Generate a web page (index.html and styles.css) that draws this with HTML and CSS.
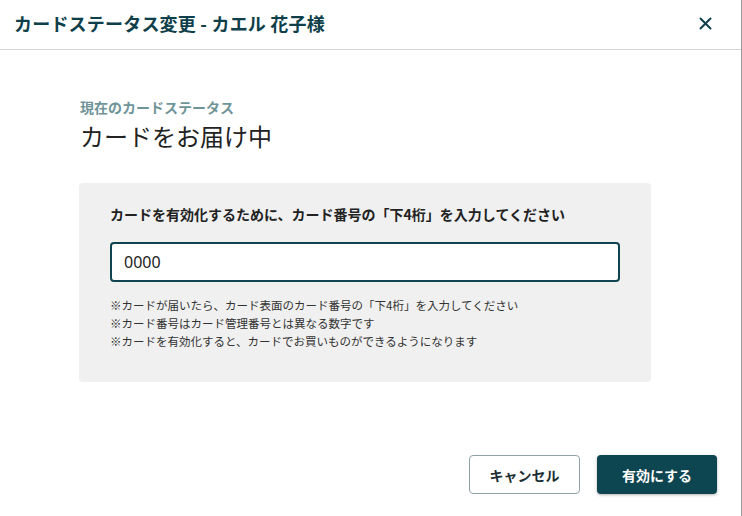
FILE: index.html
```html
<!DOCTYPE html>
<html lang="ja">
<head>
<meta charset="utf-8">
<link rel="stylesheet" href="styles.css">
</head>
<body>
<div class="dialog">
  <header class="dialog-header">
    <h1 class="dialog-title">カードステータス変更 - カエル 花子様</h1>
    <button class="close-btn" aria-label="閉じる">
      <svg width="13" height="13" viewBox="0 0 13 13"><path d="M1.5 1.5 L11.5 11.5 M11.5 1.5 L1.5 11.5" stroke="#0f3f4a" stroke-width="2" stroke-linecap="round"/></svg>
    </button>
  </header>
  <main class="dialog-body">
    <div class="status">
      <p class="status-label">現在のカードステータス</p>
      <p class="status-value">カードをお届け中</p>
    </div>
    <section class="panel">
      <p class="panel-label">カードを有効化するために、カード番号の「下4桁」を入力してください</p>
      <div class="input">0000</div>
      <ul class="notes">
        <li>※カードが届いたら、カード表面のカード番号の「下4桁」を入力してください</li>
        <li>※カード番号はカード管理番号とは異なる数字です</li>
        <li>※カードを有効化すると、カードでお買いものができるようになります</li>
      </ul>
    </section>
  </main>
  <footer class="dialog-footer">
    <button class="btn btn-cancel">キャンセル</button>
    <button class="btn btn-primary">有効にする</button>
  </footer>
</div>
</body>
</html>
```
FILE: styles.css
```css
* { box-sizing: border-box; }
html, body { margin: 0; padding: 0; background: #fff; }
body {
  font-family: "Noto Sans CJK JP", "Noto Sans", sans-serif;
  color: #222;
}
.dialog {
  width: 742px;
  height: 516px;
  border-right: 1px solid #9a9a9a;
  display: flex;
  flex-direction: column;
}
.dialog-header {
  height: 50px;
  flex: none;
  border-bottom: 1px solid #d4d4d4;
  display: flex;
  align-items: center;
  justify-content: space-between;
  padding: 0 29px 0 14px;
}
.dialog-title {
  margin: 0;
  font-size: 18px;
  font-weight: 700;
  color: #0f3f4a;
  letter-spacing: 0.2px;
  padding-bottom: 3px;
}
.close-btn {
  border: 0;
  background: none;
  padding: 0;
  width: 13px;
  height: 13px;
  display: flex;
  margin-bottom: 3px;
}
.dialog-body {
  flex: 1;
  padding: 47px 90px 0 79px;
}
.status { padding-left: 1px; }
.status-label {
  margin: 0;
  font-size: 14px;
  font-weight: 700;
  color: #6e9497;
  line-height: 20px;
}
.status-value {
  margin: 2px 0 0;
  font-size: 24px;
  font-weight: 400;
  color: #222;
  line-height: 34px;
}
.panel {
  margin-top: 30px;
  height: 199px;
  background: #f0f0f0;
  border-radius: 4px;
  padding: 21px 31px 0 31px;
}
.panel-label {
  margin: 0;
  font-size: 14px;
  font-weight: 700;
  color: #222;
  line-height: 20px;
}
.input {
  margin-top: 18px;
  height: 40px;
  border: 2px solid #0f4450;
  border-radius: 4px;
  background: #fff;
  display: flex;
  align-items: center;
  padding-left: 12px;
  font-family: "Noto Sans", "Noto Sans CJK JP", sans-serif;
  font-size: 16px;
  color: #222;
}
.notes {
  list-style: none;
  margin: 14px 0 0;
  padding: 0;
  font-size: 11.5px;
  line-height: 18px;
  color: #333;
}
.dialog-footer {
  display: flex;
  justify-content: flex-end;
  gap: 17px;
  padding: 0 24px 22px 0;
}
.btn {
  height: 39px;
  border-radius: 4px;
  font-family: "Noto Sans CJK JP", sans-serif;
  font-size: 14px;
  font-weight: 700;
  cursor: pointer;
}
.btn-cancel {
  width: 111px;
  background: #fff;
  border: 1px solid #8fa3a6;
  color: #1c2f33;
}
.btn-primary {
  width: 120px;
  background: #0d4550;
  border: 0;
  color: #fff;
  box-shadow: 0 1px 3px rgba(0,0,0,0.3);
}
```
